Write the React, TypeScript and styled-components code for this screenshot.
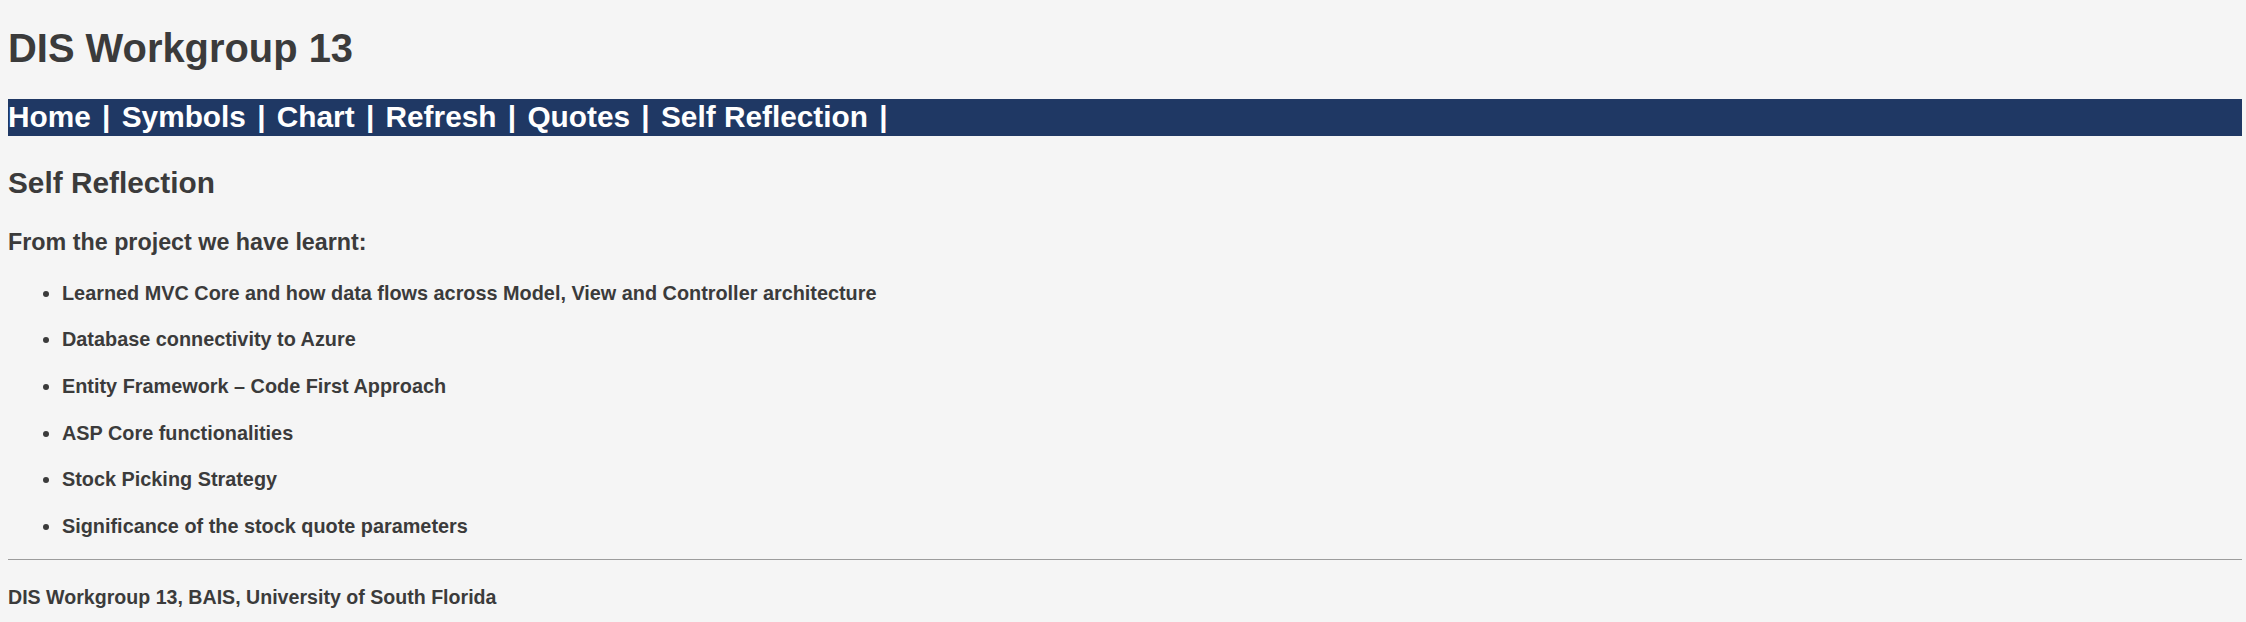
import React from "react";
import styled, { createGlobalStyle } from "styled-components";

const GlobalStyle = createGlobalStyle`
  html, body {
    margin: 0;
    padding: 0;
    background: #f5f5f5;
  }
  body {
    font-family: "Liberation Sans", Arial, sans-serif;
    color: #3b3b3b;
  }
`;

const Page = styled.div`
  padding: 24px 4px 0 8px;
  background: #f5f5f5;
  min-height: 622px;
  box-sizing: border-box;
`;

const Title = styled.h1`
  margin: 0;
  font-size: 39.9px;
  line-height: 48px;
  font-weight: 700;
  color: #3b3b3b;
`;

const NavBar = styled.nav`
  margin-top: 27px;
  background: #1f3864;
  height: 37px;
  box-sizing: border-box;
  padding-bottom: 2px;
  font-size: 29.8px;
  line-height: 35px;
  font-weight: 700;
  color: #ffffff;
  white-space: nowrap;
`;

const NavLink = styled.a`
  color: #ffffff;
  text-decoration: none;
`;

const Separator = styled.span`
  padding: 0 3px;
  white-space: pre;
`;

const SectionTitle = styled.h2`
  margin: 28.7px 0 0;
  font-size: 29.8px;
  line-height: 36px;
  font-weight: 700;
`;

const Lead = styled.h3`
  margin: 27.2px 0 0;
  font-size: 23.3px;
  line-height: 28px;
  font-weight: 700;
`;

const List = styled.ul`
  margin: 14px 0 0;
  padding-left: 54px;
  list-style: disc;
`;

const Item = styled.li`
  font-size: 19.85px;
  line-height: 46.6px;
  font-weight: 700;
`;

const Rule = styled.hr`
  margin: 10px 0 0;
  border: none;
  border-top: 1px solid #9c9c9c;
  height: 0;
`;

const Footer = styled.footer`
  margin-top: 24.7px;
  font-size: 19.6px;
  line-height: 24px;
  font-weight: 700;
`;

const links = ["Home", "Symbols", "Chart", "Refresh", "Quotes", "Self Reflection"];

const items = [
  "Learned MVC Core and how data flows across Model, View and Controller architecture",
  "Database connectivity to Azure",
  "Entity Framework \u2013 Code First Approach",
  "ASP Core functionalities",
  "Stock Picking Strategy",
  "Significance of the stock quote parameters",
];

export default function App() {
  return (
    <>
      <GlobalStyle />
      <Page>
        <Title>DIS Workgroup 13</Title>
        <NavBar>
          {links.map((l) => (
            <React.Fragment key={l}>
              <NavLink href="#">{l}</NavLink>
              <Separator> | </Separator>
            </React.Fragment>
          ))}
        </NavBar>
        <SectionTitle>Self Reflection</SectionTitle>
        <Lead>From the project we have learnt:</Lead>
        <List>
          {items.map((t) => (
            <Item key={t}>{t}</Item>
          ))}
        </List>
        <Rule />
        <Footer>DIS Workgroup 13, BAIS, University of South Florida</Footer>
      </Page>
    </>
  );
}
